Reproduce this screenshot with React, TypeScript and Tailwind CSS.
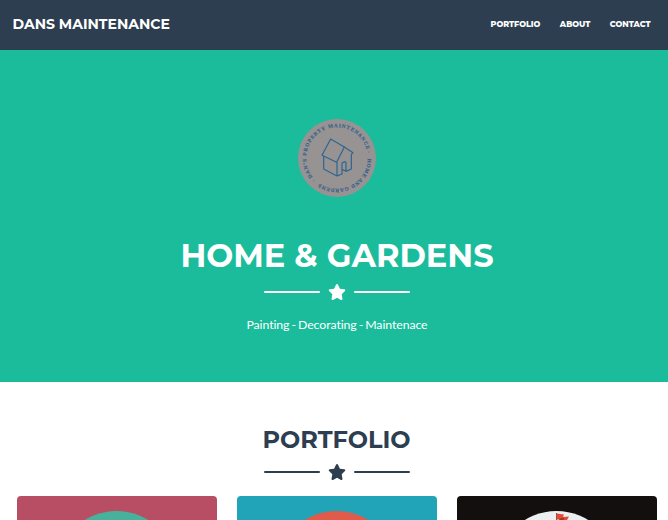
import React from "react";

const heading = "font-['Montserrat','Inter',sans-serif] whitespace-nowrap";

function Logo() {
  return (
    <svg className="block size-[78px]" viewBox="0 0 78 78">
      <defs>
        <path id="ring" d="M17.2 60.8A30.8 30.8 0 1 1 60.8 60.8A30.8 30.8 0 0 1 17.2 60.8" />
      </defs>
      <circle cx="39" cy="39" r="39" fill="#979393" />
      <g fill="#33608a" stroke="#33608a" strokeWidth=".15" fontFamily="'Liberation Serif', serif" fontWeight="700" fontSize="5.2">
        <text>
          <textPath href="#ring" startOffset="4" textLength="108">DAN’S PROPERTY MAINTENANCE</textPath>
        </text>
        <text>
          <textPath href="#ring" startOffset="121" textLength="66">HOME AND GARDENS</textPath>
        </text>
      </g>
      <circle cx="16" cy="61.8" r=".5" fill="#3d6488" />
      <circle cx="71" cy="33" r=".5" fill="#3d6488" />
      <g transform="translate(-8 -7) scale(.33333)" fill="none" stroke="#2f648f" strokeWidth="3.6" strokeLinejoin="round" strokeLinecap="round">
        <path d="M122 81L96 130L140 151L163 105Z" />
        <path d="M163 105L189 122L184 127V171L168 178V151L163 149L156 153V186L141 192L101 171V134M141 152V192M157 173L167 177" />
      </g>
    </svg>
  );
}

function Divider({ color }: { color: string }) {
  return (
    <div className={`flex items-center justify-center ${color}`}>
      <div className="h-[2px] w-14 rounded-full bg-current" />
      <svg className="mx-2 h-4 w-[18px]" viewBox="0 0 576 512" fill="currentColor">
        <path d="M316.9 18C311.600 7 300.400 0 288.100 0s-23.400 7-28.800 18L195 150.300 51.400 171.500c-12 1.800-22 10.200-25.700 21.700s-.7 24.200 7.900 32.700L137.800 329 113.200 474.700c-2 12 3 24.200 12.900 31.300s23 8 33.800 2.300l128.300-68.500 128.300 68.500c10.800 5.700 23.900 4.900 33.800-2.300s14.900-19.300 12.900-31.300L438.500 329 542.700 225.900c8.600-8.500 11.700-21.200 7.900-32.700s-13.700-19.900-25.700-21.700L381.200 150.300 316.900 18z" />
      </svg>
      <div className="h-[2px] w-14 rounded-full bg-current" />
    </div>
  );
}

function Card({ bg, circle, flag }: { bg: string; circle: string; flag?: boolean }) {
  return (
    <div className={`h-[150px] w-[200px] shrink-0 overflow-hidden rounded ${bg}`}>
      <svg className="block h-full w-full" viewBox="0 0 200 150">
        <circle cx="99.500" cy="75" r="60" fill={circle} />
        {flag && (
          <g>
            <path d="M99.500 17V40" stroke="#9b5147" strokeWidth="1" />
            <path d="M100 17.500L107 18.500L106 21L112 20.500L110 24L113 27H105L102 23.500H100Z" fill="#df4b38" />
            <path d="M102 23L107 21.500L106 27Z" fill="#a92f25" />
          </g>
        )}
      </svg>
    </div>
  );
}

export default function App() {
  return (
    <div className="h-[520px] w-[668px] overflow-hidden bg-white font-['Lato',sans-serif]">
      <nav className={`flex h-[50px] items-center justify-between bg-[#2c3e50] pr-[17.5px] pl-[12.5px] text-white ${heading}`}>
        <a className="pb-[2px] text-[14px] leading-5 font-bold">DANS MAINTENANCE</a>
        <div className="flex gap-[19.5px] pb-[2px] text-[8px] leading-4 font-extrabold">
          <a>PORTFOLIO</a>
          <a>ABOUT</a>
          <a>CONTACT</a>
        </div>
      </nav>
      <header className="flex h-[332px] flex-col items-center bg-[#1abc9c] pt-[69px] pl-[6px] text-white">
        <Logo />
        <h1 className={`mt-[40px] h-[38px] text-[32px] leading-[38px] font-bold ${heading}`}>HOME &amp; GARDENS</h1>
        <div className="mt-[9px]"><Divider color="text-white" /></div>
        <p className="mt-[16px] text-[12.3px] leading-[18px] tracking-[-0.09px] [word-spacing:-1px] whitespace-nowrap">Painting - Decorating - Maintenace</p>
      </header>
      <section className="flex flex-col items-center pt-[43px]">
        <h2 className={`ml-[5px] h-[29px] text-[24px] leading-[29px] font-bold text-[#2c3e50] ${heading}`}>PORTFOLIO</h2>
        <div className="mt-[10px] ml-[6px]"><Divider color="text-[#2c3e50]" /></div>
        <div className="mt-4 flex w-full gap-5 pl-[17px]">
          <Card bg="bg-[#b84e63]" circle="#48b19b" />
          <Card bg="bg-[#21a3b8]" circle="#e05b4a" />
          <Card bg="bg-[#130f0e]" circle="#ecf0f0" flag />
        </div>
      </section>
    </div>
  );
}
